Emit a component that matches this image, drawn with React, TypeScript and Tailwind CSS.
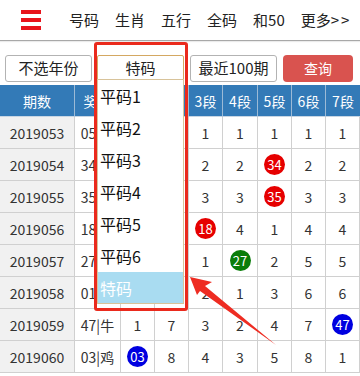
import React from "react";

type Cell = string | { ball: string; color: string };

const RED = "bg-[#e60000]";
const GREEN = "bg-[#0a7d0a]";
const BLUE = "bg-[#0000e0]";

const rows: { q: string; t: string; c: Cell[] }[] = [
  { q: "2019053", t: "05|羊", c: ["1", "1", "1", "1", "1", "1", "1"] },
  { q: "2019054", t: "34|虎", c: ["2", "2", "2", "2", { ball: "34", color: RED }, "2", "2"] },
  { q: "2019055", t: "35|牛", c: ["3", "3", "3", "3", { ball: "35", color: RED }, "3", "3"] },
  { q: "2019056", t: "18|马", c: ["4", "4", { ball: "18", color: RED }, "4", "1", "4", "4"] },
  { q: "2019057", t: "27|鸡", c: ["5", "5", "1", { ball: "27", color: GREEN }, "2", "5", "5"] },
  { q: "2019058", t: "01|猪", c: ["6", "6", "2", "1", "3", "6", "6"] },
  { q: "2019059", t: "47|牛", c: ["1", "7", "3", "2", "4", "7", { ball: "47", color: BLUE }] },
  { q: "2019060", t: "03|鸡", c: [{ ball: "03", color: BLUE }, "8", "4", "3", "5", "8", "1"] },
];

const headers = ["期数", "奖号", "1段", "2段", "3段", "4段", "5段", "6段", "7段"];

const font = { fontFamily: '"Noto Sans CJK SC", "Noto Sans", sans-serif' };

export default function App() {
  return (
    <div className="relative w-[360px] h-[376px] overflow-hidden bg-white text-[#333]" style={font}>
      {/* Header */}
      <div className="h-[41px] flex items-center border-b border-[#a8a8a8] shadow-[0_1px_1px_rgba(0,0,0,0.08)]">
        <div className="ml-[21px] w-[20px] flex flex-col gap-[4px]">
          <div className="h-[4px] bg-[#e8141c]" />
          <div className="h-[4px] bg-[#e8141c]" />
          <div className="h-[4px] bg-[#e8141c]" />
        </div>
        <div className="ml-[28px] flex gap-[16px] text-[15px] leading-[20px] text-[#222]">
          <span>号码</span>
          <span>生肖</span>
          <span>五行</span>
          <span>全码</span>
          <span>和50</span>
          <span>
            更多<span className="tracking-[2px]">&gt;&gt;</span>
          </span>
        </div>
      </div>

      {/* Controls */}
      <div className="flex items-center pt-[10px] h-[44px]">
        <div className="ml-[5px] w-[87px] h-[27px] border border-[#b3b3b3] rounded-[3px] flex items-center justify-center text-[15px] leading-[20px] text-[#222]">
          不选年份
        </div>
        <div className="ml-[5px] w-[87px] h-[27px] border border-[#d4a862] rounded-[2px] flex items-center justify-center text-[15px] leading-[20px] text-[#222]">
          特码
        </div>
        <div className="ml-[6px] w-[87px] h-[27px] border border-[#b3b3b3] rounded-[3px] flex items-center justify-center text-[15px] leading-[20px] text-[#222]">
          最近100期
        </div>
        <div className="ml-[6px] w-[70px] h-[27px] bg-[#d9534f] rounded-[4px] flex items-center justify-center text-[14px] leading-[20px] text-white">
          查询
        </div>
      </div>

      {/* Table */}
      <div className="grid grid-cols-[75px_46px_34px_34px_34px_35px_34px_34px_34px]">
        {headers.map((h, i) => (
          <div
            key={h}
            className={`h-[32px] bg-[#337ab7] text-white text-[14px] leading-[20px] flex items-center justify-center border-b border-[#c8d6e4] ${
              i < headers.length - 1 ? "border-r border-r-[#9cbad6]" : ""
            }`}
          >
            {h}
          </div>
        ))}
        {rows.map((r) => (
          <React.Fragment key={r.q}>
            <div className="h-[32px] bg-[#f1f1f1] border-r border-b border-[#d0d0d0] flex items-center justify-center text-[14px] leading-[20px]">
              {r.q}
            </div>
            <div className="h-[32px] border-r border-b border-[#d0d0d0] flex items-center justify-center text-[14px] leading-[20px]">
              {r.t}
            </div>
            {r.c.map((c, j) => (
              <div
                key={j}
                className="h-[32px] border-r border-b border-[#d0d0d0] flex items-center justify-center text-[14px] leading-[20px]"
              >
                {typeof c === "string" ? (
                  c
                ) : (
                  <span
                    className={`w-[21px] h-[21px] rounded-full ${c.color} text-white text-[13px] leading-[21px] flex items-center justify-center`}
                  >
                    {c.ball}
                  </span>
                )}
              </div>
            ))}
          </React.Fragment>
        ))}
      </div>

      {/* Dropdown list */}
      <div className="absolute left-[97px] top-[79px] w-[87px] bg-white border border-[#d8c39a] flex flex-col">
        {["平码1", "平码2", "平码3", "平码4", "平码5", "平码6"].map((t) => (
          <div key={t} className="h-[32px] pl-[2px] flex items-center text-[16px] leading-[20px] text-[#111]">
            {t}
          </div>
        ))}
        <div className="h-[31px] pl-[2px] flex items-center text-[16px] leading-[20px] text-white bg-[#a9dcf1]">
          特码
        </div>
      </div>

      {/* Annotation rectangle */}
      <div className="absolute left-[94px] top-[42px] w-[94px] h-[269px] border-[3px] border-[#ea2a1d] rounded-[3px]" />

      {/* Annotation arrow */}
      <svg className="absolute left-0 top-0" width="360" height="376" viewBox="0 0 360 376">
        <polygon
          points="190,277 212,282 205,286 276,345 200,291 197,295"
          fill="#ee2c22"
        />
      </svg>
    </div>
  );
}
